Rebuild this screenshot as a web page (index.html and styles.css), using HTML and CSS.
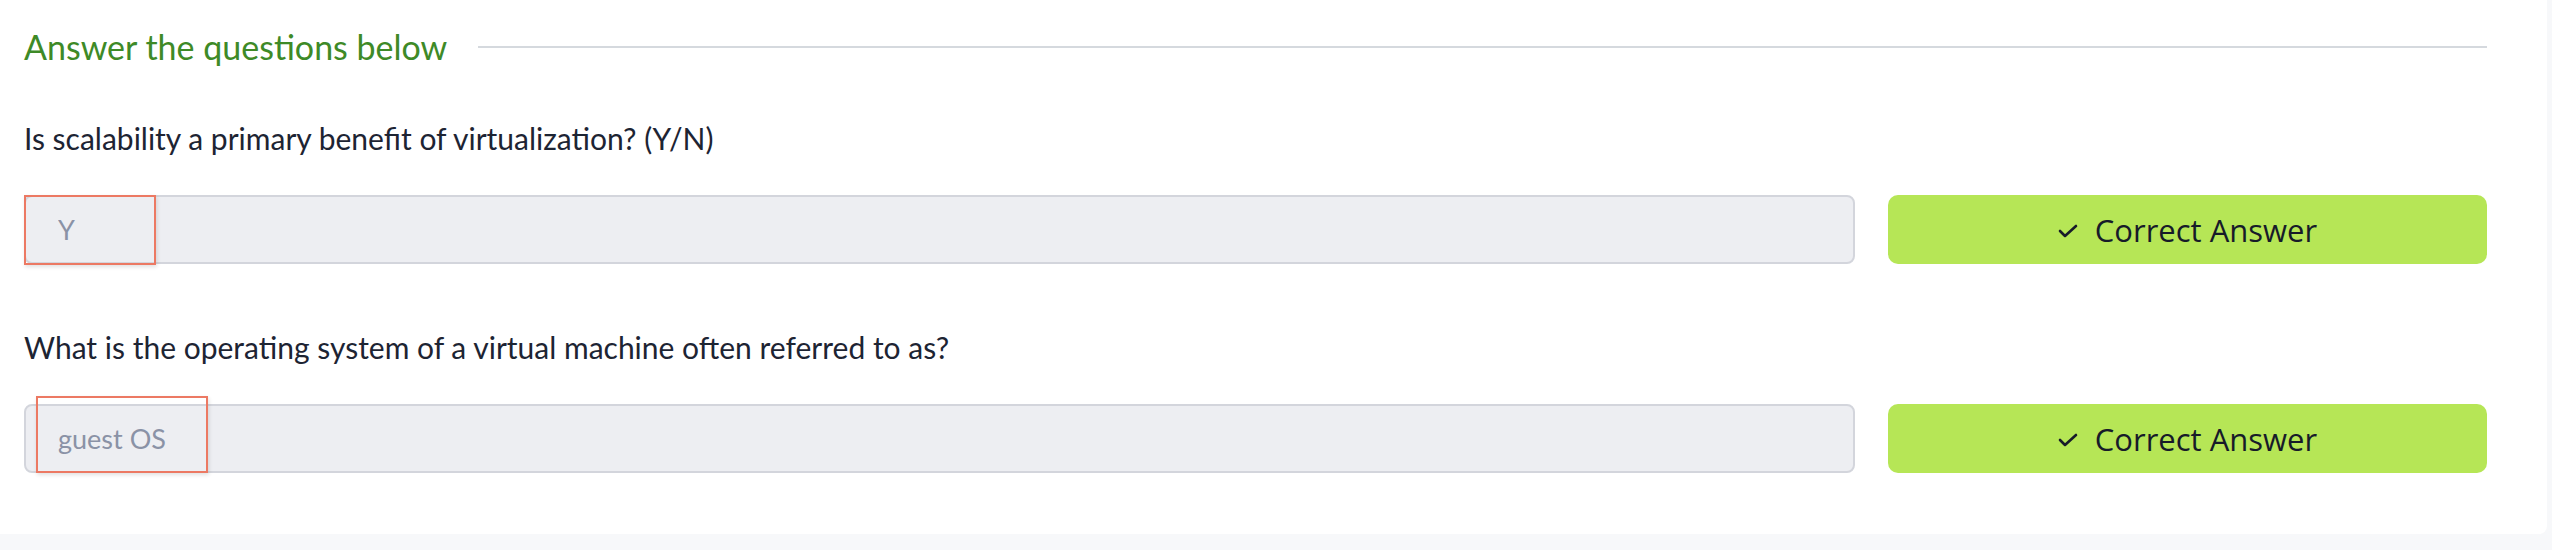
FILE: index.html
```html
<!DOCTYPE html>
<html lang="en">
<head>
<meta charset="utf-8">
<title>Answer the questions below</title>
<link rel="stylesheet" href="styles.css">
</head>
<body>
<div class="page">
  <section class="card">
    <div class="heading-row">
      <h3 class="heading">Answer the questions below</h3>
      <span class="rule"></span>
    </div>

    <div class="question">
      <p class="q-text">Is scalability a primary benefit of virtualization? (Y/N)</p>
      <div class="answer-row">
        <div class="field">
          <input class="answer-input" type="text" value="Y" readonly>
          <span class="mark mark-one"></span>
        </div>
        <button class="submit" type="button">
          <svg class="check" viewBox="0 0 20 14" width="20" height="14" aria-hidden="true"><polyline points="2,7 7,12 18,2" fill="none" stroke="currentColor" stroke-width="2.6" stroke-linecap="round" stroke-linejoin="round"/></svg>
          <span>Correct Answer</span>
        </button>
      </div>
    </div>

    <div class="question">
      <p class="q-text">What is the operating system of a virtual machine often referred to as?</p>
      <div class="answer-row">
        <div class="field">
          <input class="answer-input" type="text" value="guest OS" readonly>
          <span class="mark mark-two"></span>
        </div>
        <button class="submit" type="button">
          <svg class="check" viewBox="0 0 20 14" width="20" height="14" aria-hidden="true"><polyline points="2,7 7,12 18,2" fill="none" stroke="currentColor" stroke-width="2.6" stroke-linecap="round" stroke-linejoin="round"/></svg>
          <span>Correct Answer</span>
        </button>
      </div>
    </div>
  </section>
</div>
</body>
</html>
```

FILE: styles.css
```css
* { box-sizing: border-box; }

html, body {
  margin: 0;
  padding: 0;
  background: #f7f8fa;
}

body {
  font-family: Lato, "Noto Sans", sans-serif;
  color: #1d2433;
}

.page {
  padding: 0 5px 15px 0;
}

.card {
  background: #ffffff;
  border-radius: 0 0 8px 0;
  padding: 24px 60px 61px 24px;
  display: flex;
  flex-direction: column;
}

.heading-row {
  display: flex;
  align-items: center;
  gap: 31px;
  height: 45px;
  margin-bottom: 49px;
}

.heading {
  margin: 0;
  font-size: 34px;
  font-weight: 400;
  line-height: 45px;
  color: #3e8a27;
  white-space: nowrap;
}

.rule {
  flex: 1;
  height: 2px;
  background: #d5d9de;
}

.question + .question {
  margin-top: 63px;
}

.q-text {
  margin: 0 0 37px 0;
  font-size: 30px;
  line-height: 40px;
  color: #1d2433;
}

.answer-row {
  display: flex;
  gap: 33px;
  height: 69px;
}

.field {
  position: relative;
  flex: 1;
}

.answer-input {
  width: 100%;
  height: 100%;
  margin: 0;
  border: 2px solid #d3d5dc;
  border-radius: 8px;
  background: #edeef2;
  padding: 0 0 0 32px;
  font-family: Lato, "Noto Sans", sans-serif;
  font-size: 27px;
  color: #8a92a6;
  outline: none;
}

.mark {
  position: absolute;
  border: 2px solid #ec7963;
  box-shadow: 1px 2px 4px rgba(0, 0, 0, 0.12);
  pointer-events: none;
}

.mark-one {
  left: 0;
  top: 0;
  width: 132px;
  height: 70px;
}

.mark-two {
  left: 12px;
  top: -8px;
  width: 172px;
  height: 77px;
}

.submit {
  flex: 0 0 599px;
  display: flex;
  align-items: center;
  justify-content: center;
  gap: 17px;
  border: 0;
  border-radius: 10px;
  background: #b6e656;
  color: #171b29;
  font-family: "Open Sans", "Noto Sans", sans-serif;
  font-size: 31px;
  cursor: pointer;
  padding: 0;
}

.check {
  display: block;
  margin-top: 2px;
}
```
